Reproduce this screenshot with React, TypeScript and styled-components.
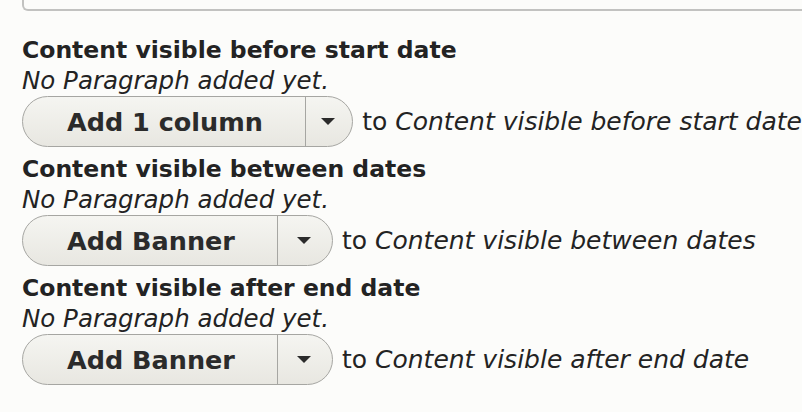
import React from "react";
import styled, { createGlobalStyle } from "styled-components";

const GlobalStyle = createGlobalStyle`
  html, body {
    margin: 0;
    padding: 0;
    background: #fcfcfa;
  }
  body {
    font-family: "DejaVu Sans", Verdana, sans-serif;
    color: #232323;
    overflow: hidden;
  }
`;

const Page = styled.div`
  width: 802px;
  height: 412px;
  overflow: hidden;
  padding-left: 22px;
  box-sizing: border-box;
`;

const TopBox = styled.div`
  width: 820px;
  height: 11px;
  border: 2px solid #c2c2c0;
  border-top: none;
  border-right: none;
  border-bottom-left-radius: 6px;
  box-sizing: border-box;
  margin-bottom: 24px;
`;

const Field = styled.div`
  display: flex;
  flex-direction: column;
  margin-bottom: 7px;
`;

const Title = styled.div`
  font-size: 23.5px;
  font-weight: bold;
  line-height: 30px;
  white-space: nowrap;
`;

const Empty = styled.div`
  font-size: 24.5px;
  font-style: italic;
  line-height: 31px;
  white-space: nowrap;
`;

const Row = styled.div`
  display: flex;
  align-items: center;
  gap: 9px;
  white-space: nowrap;
`;

const DropButton = styled.div`
  display: flex;
  height: 51px;
  border: 1px solid #a6a6a2;
  border-radius: 26px;
  background: linear-gradient(#f5f5f1, #e8e7e1);
  box-sizing: border-box;
  overflow: hidden;
`;

const MainButton = styled.button`
  font-family: inherit;
  font-size: 25.5px;
  font-weight: bold;
  color: #2b2b2b;
  background: transparent;
  border: none;
  padding: 0 42px 0 44px;
  height: 100%;
`;

const Toggle = styled.span`
  width: 52px;
  border-left: 1px solid #a6a6a2;
  display: flex;
  align-items: center;
  justify-content: center;
  padding-right: 2px;
`;

const Caret = styled.span`
  width: 0;
  height: 0;
  border-left: 7px solid transparent;
  border-right: 7px solid transparent;
  border-top: 7px solid #2b2b2b;
`;

const Target = styled.span`
  font-size: 25px;
  em {
    font-style: italic;
  }
`;

const fields = [
  { title: "Content visible before start date", button: "Add 1 column" },
  { title: "Content visible between dates", button: "Add Banner" },
  { title: "Content visible after end date", button: "Add Banner" },
];

export default function App() {
  return (
    <>
      <GlobalStyle />
      <Page>
        <TopBox />
        {fields.map((f) => (
          <Field key={f.title}>
            <Title>{f.title}</Title>
            <Empty>No Paragraph added yet.</Empty>
            <Row>
              <DropButton>
                <MainButton>{f.button}</MainButton>
                <Toggle>
                  <Caret />
                </Toggle>
              </DropButton>
              <Target>
                to <em>{f.title}</em>
              </Target>
            </Row>
          </Field>
        ))}
      </Page>
    </>
  );
}
